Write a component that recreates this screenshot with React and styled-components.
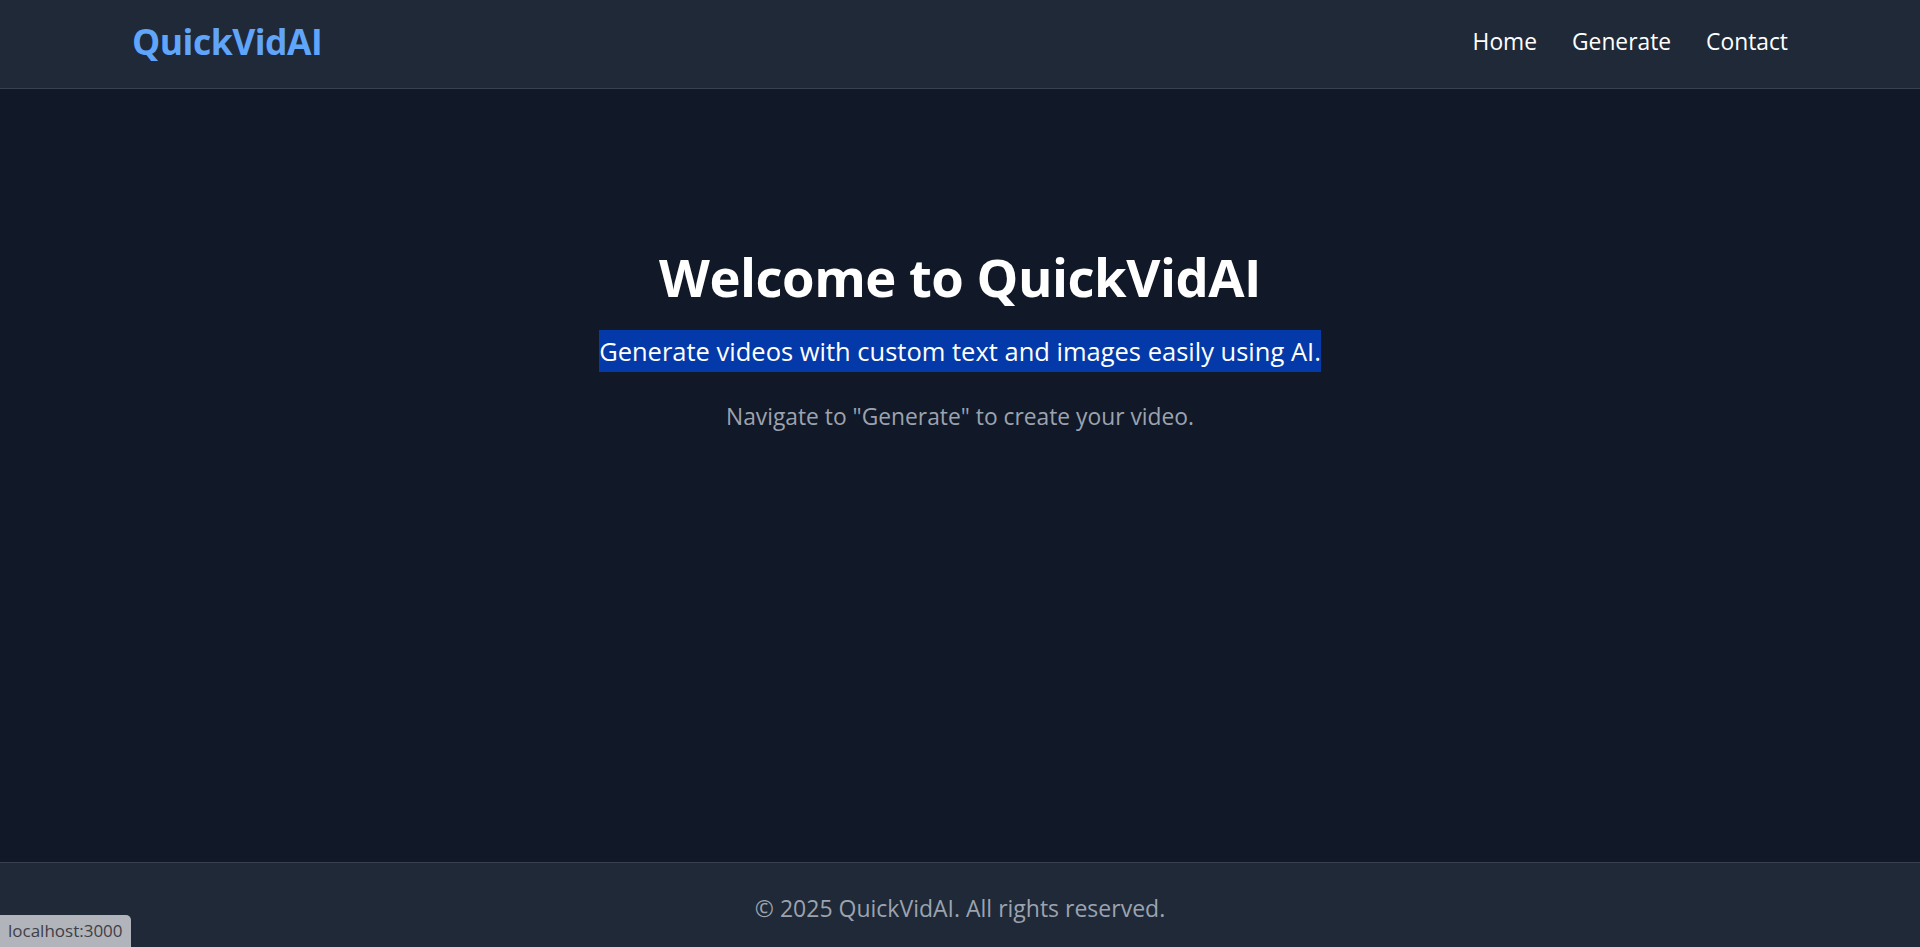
import styled, { createGlobalStyle } from "styled-components"

const GlobalStyle = createGlobalStyle`
  html, body {
    margin: 0;
    padding: 0;
    background: #111827;
  }
  body {
    font-family: "Open Sans", "Noto Sans", sans-serif;
  }
`

const Page = styled.div`
  min-height: 947px;
  display: flex;
  flex-direction: column;
  background: #111827;
  color: #ffffff;
`

const Header = styled.header`
  height: 89px;
  box-sizing: border-box;
  padding: 0 132px 6px;
  display: flex;
  align-items: center;
  justify-content: space-between;
  background: #1f2937;
  border-bottom: 1px solid #374151;
`

const Logo = styled.a`
  font-size: 35.5px;
  font-weight: 700;
  line-height: 40px;
  color: #60a5fa;
  text-decoration: none;
  letter-spacing: -0.5px;
`

const Nav = styled.nav`
  display: flex;
  gap: 35px;
  padding-top: 2px;
`

const NavLink = styled.a`
  font-size: 22.8px;
  line-height: 32px;
  color: #ffffff;
  text-decoration: none;
`

const Main = styled.main`
  flex: 1;
  display: flex;
  flex-direction: column;
  align-items: center;
  padding-top: 156px;
`

const Title = styled.h1`
  margin: 0;
  font-size: 52.6px;
  line-height: 64px;
  font-weight: 700;
  letter-spacing: -0.5px;
`

const Subtitle = styled.p`
  margin: 21px 0 0;
  font-size: 25.5px;
  line-height: 42px;
  background: #0339a8;
  color: #ffffff;
`

const Hint = styled.p`
  margin: 29px 0 0;
  font-size: 22.8px;
  line-height: 32px;
  color: #9ca3af;
`

const Footer = styled.footer`
  height: 85px;
  box-sizing: border-box;
  padding-top: 29px;
  text-align: center;
  background: #1f2937;
  border-top: 1px solid #374151;
`

const FooterText = styled.p`
  margin: 0;
  font-size: 23px;
  line-height: 32px;
  color: #9ca3af;
`

const StatusBubble = styled.div`
  position: fixed;
  left: 0;
  bottom: 0;
  padding: 0 8px;
  height: 32px;
  line-height: 32px;
  font-size: 17px;
  color: #3f3f46;
  background: #b1b4bb;
  border-top-right-radius: 5px;
`

const App = () => {
  return (
    <>
      <GlobalStyle />
      <Page>
        <Header>
          <Logo href="#">QuickVidAI</Logo>
          <Nav>
            <NavLink href="#">Home</NavLink>
            <NavLink href="#">Generate</NavLink>
            <NavLink href="#">Contact</NavLink>
          </Nav>
        </Header>
        <Main>
          <Title>Welcome to QuickVidAI</Title>
          <Subtitle>Generate videos with custom text and images easily using AI.</Subtitle>
          <Hint>Navigate to "Generate" to create your video.</Hint>
        </Main>
        <Footer>
          <FooterText>© 2025 QuickVidAI. All rights reserved.</FooterText>
        </Footer>
      </Page>
      <StatusBubble>localhost:3000</StatusBubble>
    </>
  )
}

export default App
